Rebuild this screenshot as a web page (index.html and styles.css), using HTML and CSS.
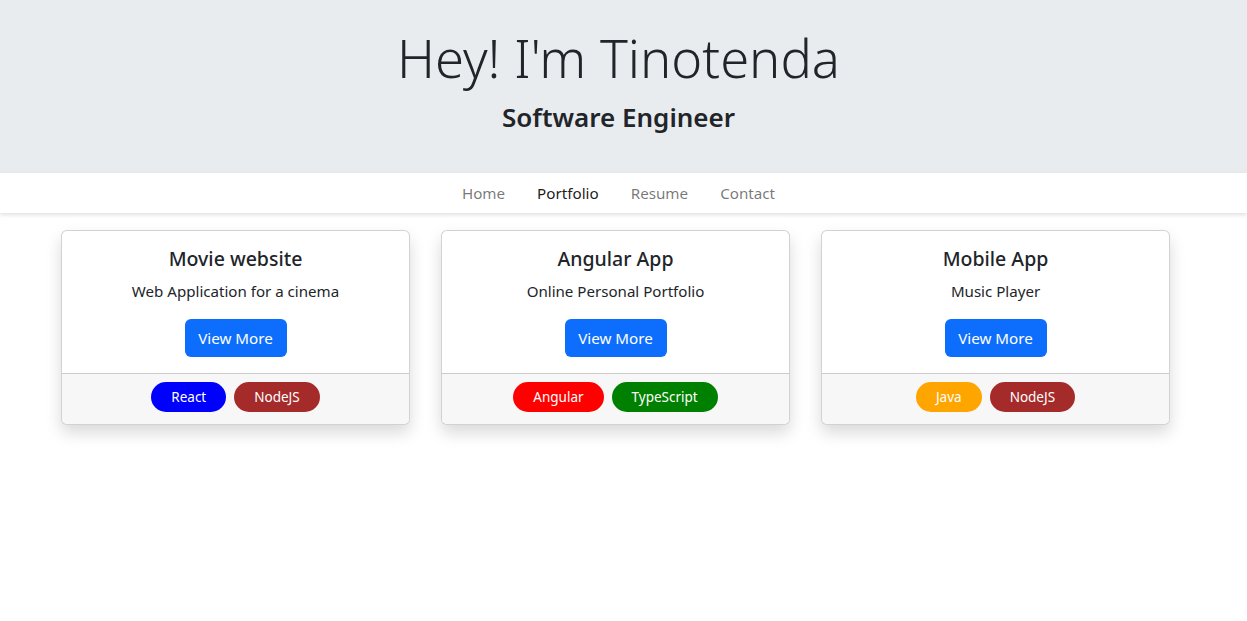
FILE: index.html
```html
<!DOCTYPE html>
<html lang="en">
<head>
<meta charset="utf-8">
<title>Tinotenda</title>
<link rel="stylesheet" href="styles.css">
</head>
<body>
<header class="hero">
  <h1 class="hero-title">Hey! I'm Tinotenda</h1>
  <h3 class="hero-sub">Software Engineer</h3>
</header>
<nav class="nav">
  <a class="nav-link" href="#">Home</a>
  <a class="nav-link active" href="#">Portfolio</a>
  <a class="nav-link" href="#">Resume</a>
  <a class="nav-link" href="#">Contact</a>
</nav>
<main class="cards">
  <div class="card">
    <div class="card-body">
      <h5 class="card-title">Movie website</h5>
      <p class="card-text">Web Application for a cinema</p>
      <a class="btn" href="#">View More</a>
    </div>
    <div class="card-footer">
      <span class="badge b-blue">React</span>
      <span class="badge b-brown">NodeJS</span>
    </div>
  </div>
  <div class="card">
    <div class="card-body">
      <h5 class="card-title">Angular App</h5>
      <p class="card-text">Online Personal Portfolio</p>
      <a class="btn" href="#">View More</a>
    </div>
    <div class="card-footer">
      <span class="badge b-red">Angular</span>
      <span class="badge b-green">TypeScript</span>
    </div>
  </div>
  <div class="card">
    <div class="card-body">
      <h5 class="card-title">Mobile App</h5>
      <p class="card-text">Music Player</p>
      <a class="btn" href="#">View More</a>
    </div>
    <div class="card-footer">
      <span class="badge b-orange">Java</span>
      <span class="badge b-brown">NodeJS</span>
    </div>
  </div>
</main>
</body>
</html>
```

FILE: styles.css
```css
* { box-sizing: border-box; }
html, body { margin: 0; padding: 0; }
body {
  font-family: "Noto Sans", "Open Sans", sans-serif;
  font-size: 15px;
  color: #212529;
  background: #fff;
}
.hero {
  background: #e9ecef;
  height: 173px;
  display: flex;
  flex-direction: column;
  align-items: center;
  padding-top: 26px;
  padding-right: 10px;
}
.hero-title {
  margin: 0;
  font-size: 52.5px;
  font-weight: 300;
  line-height: 64px;
}
.hero-sub {
  margin: 10px 0 0;
  font-size: 26px;
  font-weight: 600;
  line-height: 34px;
}
.nav {
  height: 40px;
  display: flex;
  justify-content: center;
  align-items: center;
  padding-right: 10px;
  background: #fff;
  box-shadow: 0 2px 4px rgba(0,0,0,0.12);
  position: relative;
}
.nav-link {
  padding: 0 16px;
  text-decoration: none;
  color: rgba(0,0,0,0.55);
  font-size: 15.2px;
}
.nav-link.active { color: rgba(0,0,0,0.9); }
.cards {
  display: flex;
  justify-content: center;
  gap: 31px;
  padding: 17px 16px 40px 0;
}
.card {
  width: 349px;
  border: 1px solid rgba(0,0,0,0.175);
  border-radius: 6px;
  box-shadow: 0 8px 16px rgba(0,0,0,0.15);
  background: #fff;
  overflow: hidden;
  display: flex;
  flex-direction: column;
}
.card-body {
  padding: 16px;
  display: flex;
  flex-direction: column;
  align-items: center;
}
.card-title {
  margin: 0 0 8px;
  font-size: 19.5px;
  font-weight: 500;
  line-height: 24px;
}
.card-text {
  margin: 0 0 16px;
  line-height: 24px;
  font-size: 15.1px;
}
.btn {
  display: inline-block;
  background: #0d6efd;
  color: #fff;
  text-decoration: none;
  padding: 7px 12px;
  border-radius: 6px;
  line-height: 24px;
  height: 38px;
  width: 102px;
  text-align: center;
  white-space: nowrap;
  font-size: 15.2px;
}
.card-footer {
  background: #f7f7f7;
  border-top: 1px solid rgba(0,0,0,0.175);
  padding: 8px 16px 12px;
  display: flex;
  justify-content: center;
  gap: 8px;
}
.badge {
  display: inline-block;
  height: 30px;
  line-height: 30px;
  padding: 0 20px;
  border-radius: 15px;
  font-size: 13.5px;
  color: #fff;
}
.b-blue { background: #0000ff; }
.b-brown { background: #a52a2a; }
.b-red { background: #ff0000; }
.b-green { background: #008000; }
.b-orange { background: #ffa500; }
```
